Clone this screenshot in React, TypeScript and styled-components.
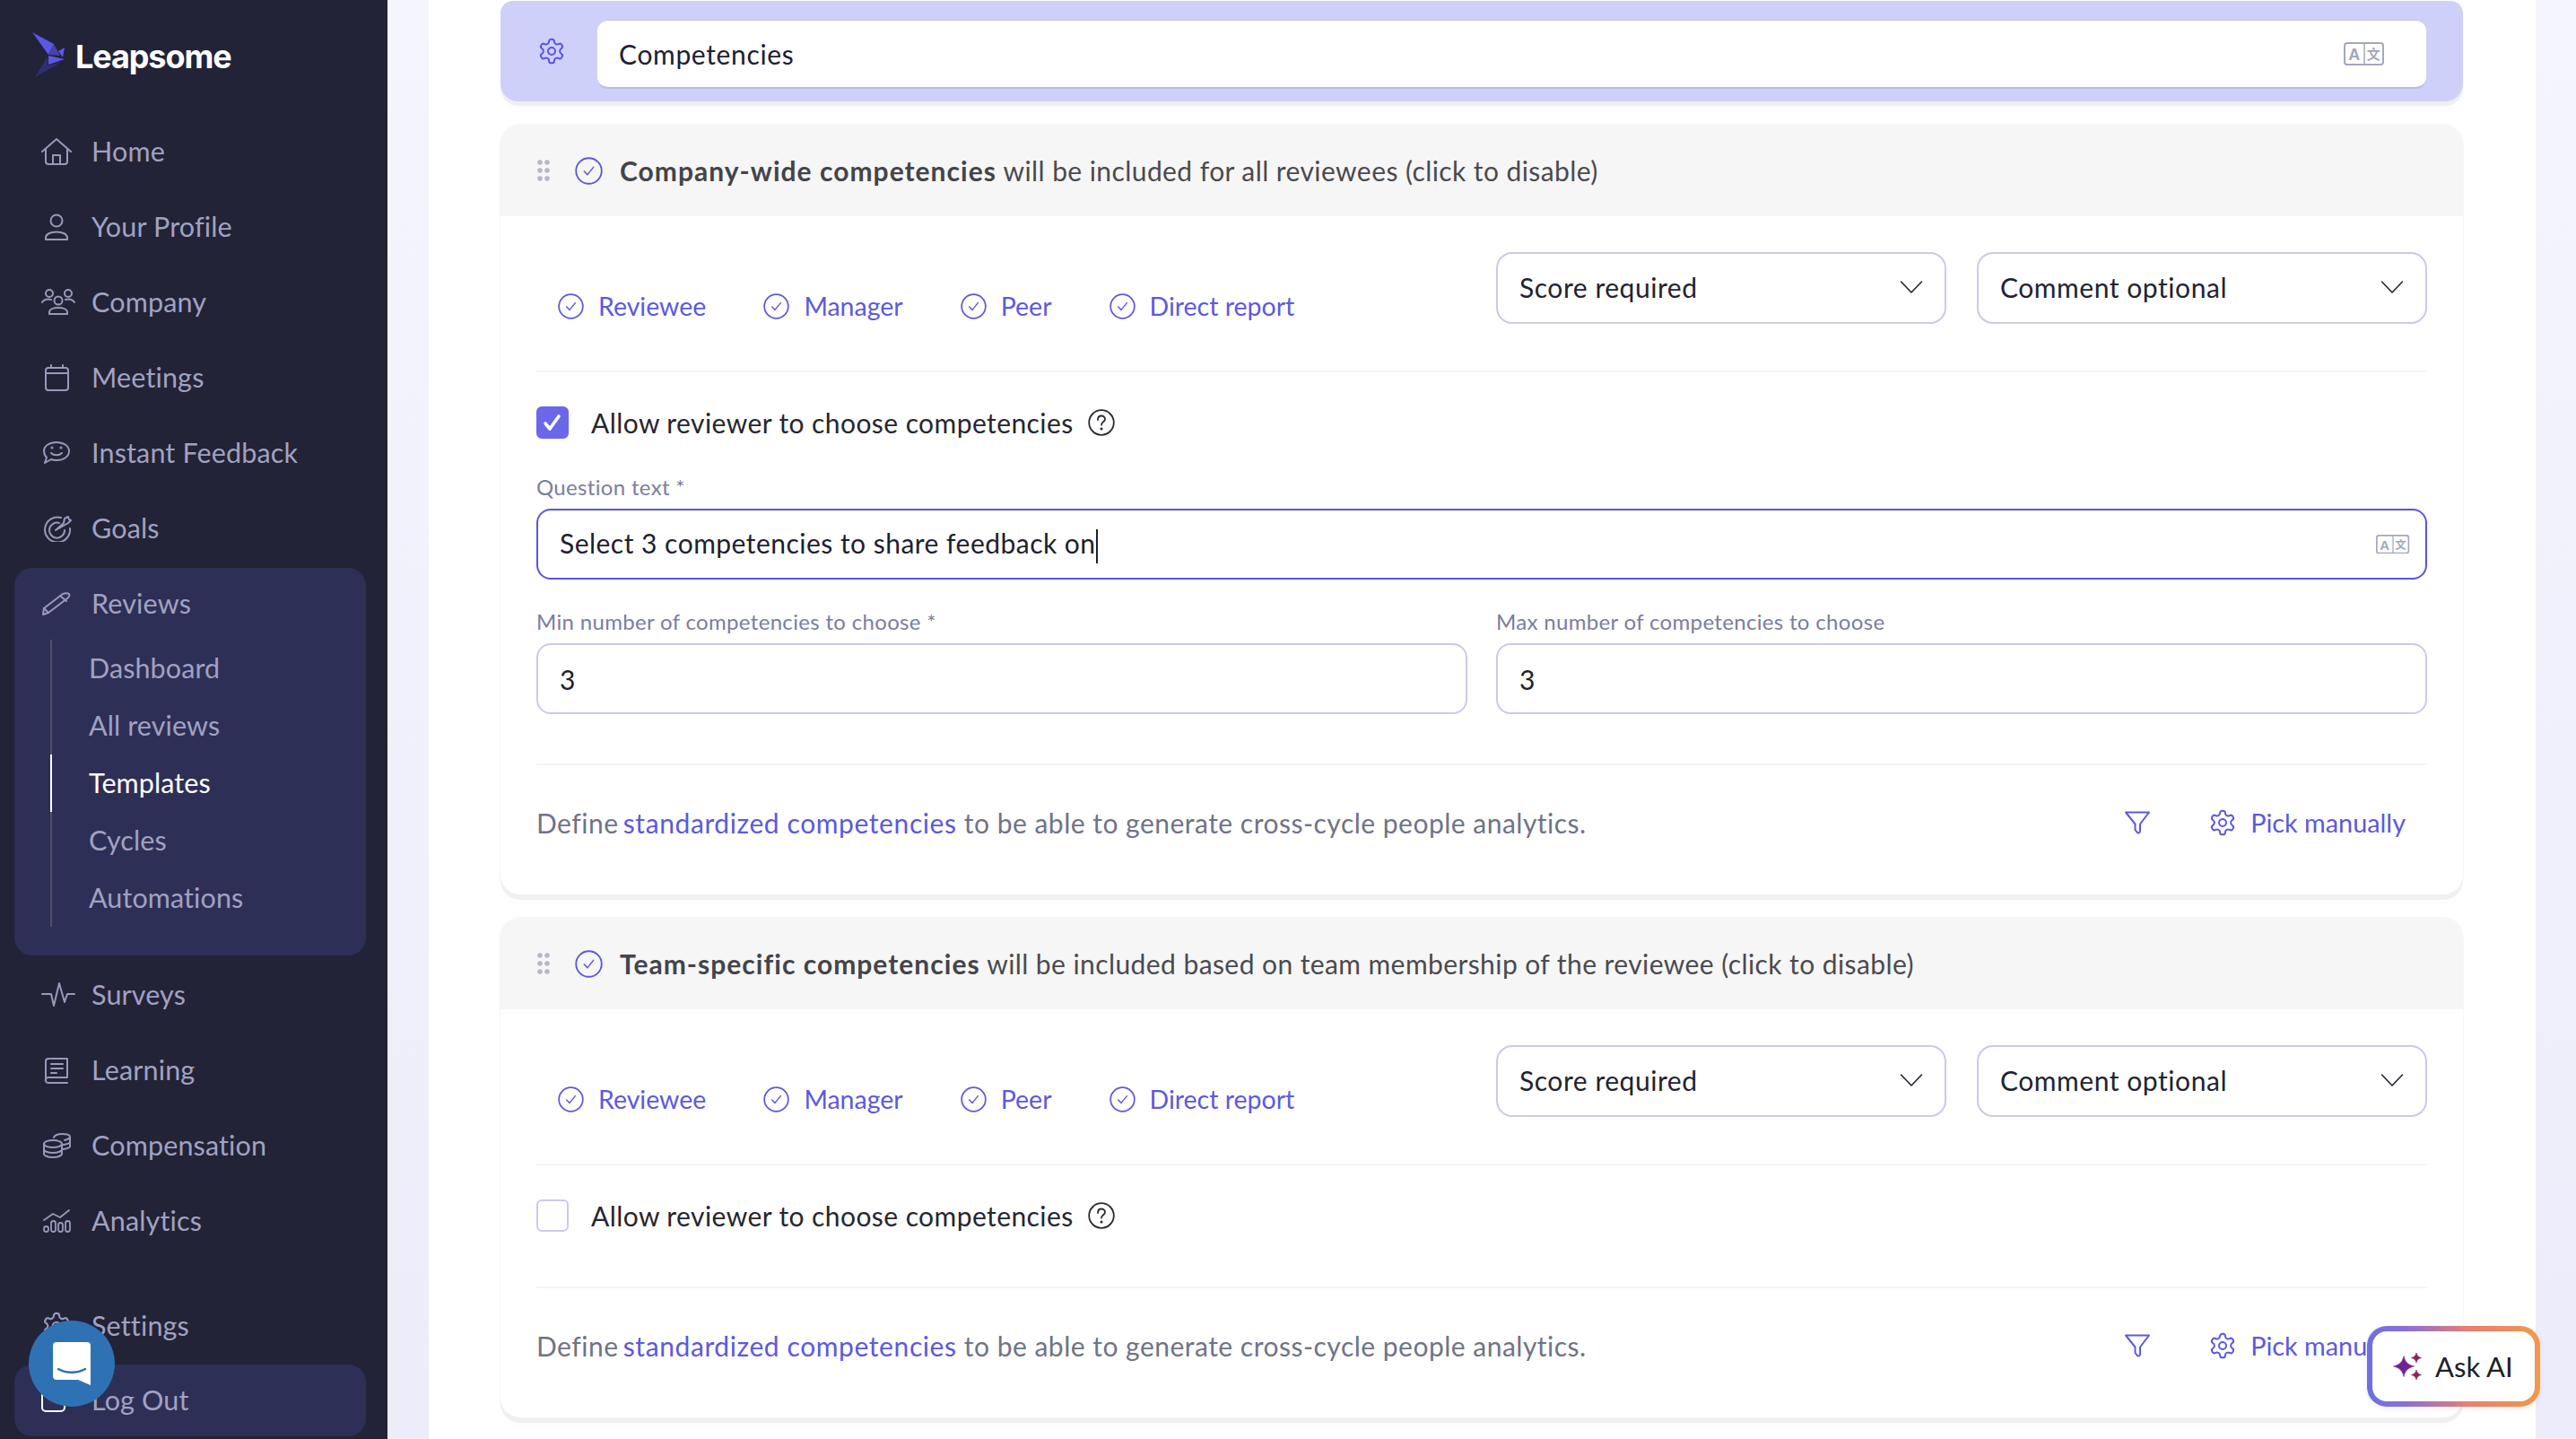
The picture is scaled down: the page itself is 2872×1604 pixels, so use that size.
import React from "react";
import styled, { createGlobalStyle } from "styled-components";

const FONT = `"Lato", "Liberation Sans", sans-serif`;

const Global = createGlobalStyle`
  html, body { margin: 0; padding: 0; background: #fff; overflow: hidden; }
  * { box-sizing: border-box; }
  body { font-family: ${FONT}; }
`;

const Page = styled.div`
  position: relative;
  display: flex;
  width: 2872px;
  height: 1604px;
  overflow: hidden;
`;

const Sidebar = styled.aside`
  flex: 0 0 432px;
  height: 1604px;
  background: #222336;
  display: flex;
  flex-direction: column;
  padding: 0 24px 0 16px;
`;

const LogoRow = styled.div`
  height: 127px;
  display: flex;
  align-items: flex-start;
  gap: 11px;
  padding: 36px 0 0 20px;
  flex: none;
`;

const LogoText = styled.span`
  font-family: "Inter", sans-serif;
  font-weight: 700;
  font-size: 36px;
  line-height: 52px;
  letter-spacing: -1.1px;
  color: #fff;
  margin-top: 1px;
`;

const NavItem = styled.div<{ $h?: number; $mt?: number }>`
  flex: none;
  height: ${(p) => p.$h ?? 84}px;
  margin-top: ${(p) => p.$mt ?? 0}px;
  display: flex;
  align-items: center;
  padding: 0 0 3px 30px;
  color: #a1a2c2;
  font-size: 30.5px;
  letter-spacing: 0.15px;
`;

const IconSlot = styled.span`
  flex: 0 0 56px;
  width: 56px;
  display: flex;
  align-items: center;
  margin-top: 3px;
  color: #9899bb;
`;

const ReviewsPanel = styled.div`
  flex: none;
  margin-top: 2px;
  height: 432px;
  background: #2e2f57;
  border-radius: 20px;
  display: flex;
  flex-direction: column;
`;

const SubList = styled.div`
  margin-left: 40px;
  border-left: 2px solid #4f5069;
  display: flex;
  flex-direction: column;
`;

const SubItem = styled.div<{ $active?: boolean }>`
  height: 64px;
  margin-left: -2px;
  padding: 0 0 3px 41px;
  display: flex;
  align-items: center;
  border-left: 2px solid ${(p) => (p.$active ? "#fff" : "transparent")};
  color: ${(p) => (p.$active ? "#fff" : "#a1a2c2")};
  font-size: 30.5px;
  letter-spacing: 0.1px;
`;

const LogoutPanel = styled(NavItem)`
  background: #2e2f57;
  border-radius: 20px;
`;

const Gutter = styled.main`
  flex: 1;
  height: 1604px;
  padding: 0 46px;
  background: linear-gradient(180deg, #f5f5fe 0%, #ececfa 100%);
`;

const Sheet = styled.div`
  height: 1604px;
  background: #fff;
  padding: 1px 81px 0 80px;
  display: flex;
  flex-direction: column;
  gap: 26px;
`;

const TitleCard = styled.div`
  flex: none;
  height: 112px;
  background: #ced0fa;
  border-radius: 14px 14px 20px 20px;
  box-shadow: 0 5px 0 #efeff3, 0 9px 6px rgba(0, 0, 0, 0.015);
  display: flex;
  align-items: flex-start;
  padding: 21px 41px 0 41px;
`;

const TitleIcon = styled.span`
  flex: 0 0 67px;
  color: #5a55e2;
  display: flex;
  margin-top: 19px;
`;

const TitleInput = styled.div`
  flex: 1;
  height: 77px;
  background: #fff;
  border-radius: 12px;
  border-bottom: 2px solid #babcdc;
  border-top: 1px solid #c3c5ea;
  display: flex;
  align-items: center;
  justify-content: space-between;
  padding: 0 46px 0 24px;
  color: #1f2030;
  font-size: 30px;
  letter-spacing: 0.65px;
`;

const Card = styled.section`
  flex: none;
  border-radius: 22px;
  background: #fff;
  box-shadow: 0 6px 0 #f0f0f0, 0 10px 8px rgba(0, 0, 0, 0.015), 0 0 0 1px #f8f8f8;
`;

const CardHead = styled.header`
  height: 102px;
  background: #f6f6f6;
  border-radius: 22px 22px 0 0;
  display: flex;
  align-items: center;
  padding: 0 0 0 41px;
  color: #4a4a4f;
  font-size: 30px;
  letter-spacing: 0.42px;
`;

const Strong = styled.strong`
  font-weight: 700;
  color: #44444a;
  letter-spacing: 1.02px;
`;

const HeadCheck = styled.span`
  margin-left: 28px;
  margin-right: 19px;
  color: #5d59dd;
  display: flex;
`;

const CardBody = styled.div`
  padding: 40px 40px 0 40px;
`;

const ControlRow = styled.div`
  display: flex;
  justify-content: space-between;
  align-items: flex-start;
  padding-bottom: 52px;
  border-bottom: 2px solid #f4f4f6;
`;

const Roles = styled.div`
  display: flex;
  gap: 64px;
  margin: 40px 0 0 24px;
`;

const Role = styled.span`
  display: flex;
  align-items: center;
  gap: 16px;
  height: 40px;
  color: #5d59dd;
  font-size: 28.5px;
`;

const Selects = styled.div`
  display: flex;
  gap: 34px;
`;

const Select = styled.div`
  width: 502px;
  height: 80px;
  border: 2px solid #c9cbe6;
  border-radius: 18px;
  display: flex;
  align-items: center;
  justify-content: space-between;
  padding: 0 24px 2px;
  color: #22232f;
  font-size: 30px;
  letter-spacing: 0.55px;
`;

const CheckRow = styled.div<{ $mb: number }>`
  display: flex;
  align-items: center;
  gap: 25px;
  margin-top: 38px;
  margin-bottom: ${(p) => p.$mb}px;
  color: #26262e;
  font-size: 30px;
  letter-spacing: 0.42px;
`;

const Box = styled.span<{ $on?: boolean }>`
  width: 36px;
  height: 36px;
  border-radius: 6px;
  background: ${(p) => (p.$on ? "#6b67eb" : "#fff")};
  border: 2px solid ${(p) => (p.$on ? "#6b67eb" : "#c9cbe6")};
  display: flex;
  align-items: center;
  justify-content: center;
  flex: none;
`;

const Help = styled.span`
  display: flex;
  margin-left: -9px;
  color: #2a2a30;
`;

const Label = styled.div<{ $mt?: number }>`
  height: 30px;
  line-height: 30px;
  margin-top: ${(p) => p.$mt ?? 0}px;
  color: #7b7da0;
  font-size: 24px;
  letter-spacing: 0.33px;
`;

const Field = styled.div<{ $focus?: boolean }>`
  height: 79px;
  margin-top: 9px;
  border: 2px solid ${(p) => (p.$focus ? "#5a55d8" : "#c9cbe6")};
  border-radius: 16px;
  display: flex;
  align-items: center;
  justify-content: space-between;
  padding: 0 17px 0 24px;
  color: #1f2030;
  font-size: 30px;
  letter-spacing: 0.48px;
`;

const FieldText = styled.span`
  margin-top: 2px;
`;

const Caret = styled.span`
  display: inline-block;
  width: 2px;
  height: 38px;
  background: #1f2030;
  vertical-align: middle;
`;

const TwoCols = styled.div`
  display: grid;
  grid-template-columns: 1038px 1038px;
  gap: 32px;
  padding-bottom: 55px;
  border-bottom: 2px solid #f4f4f6;
`;

const DefineRow = styled.div`
  display: flex;
  align-items: center;
  height: 50px;
  margin: 40px 0 54px;
  padding-bottom: 2px;
  color: #6f7387;
  font-size: 30px;
`;

const Define = styled.span`
  flex: 1;
  letter-spacing: 0.49px;
`;

const Link = styled.span`
  color: #5d59dd;
  letter-spacing: 0.6px;
  margin-left: -3px;
`;

const FilterIcon = styled.span`
  display: flex;
  color: #5d59dd;
  margin-right: 64px;
`;

const Pick = styled.span`
  display: flex;
  align-items: center;
  gap: 15px;
  color: #5d59dd;
  margin-right: 24px;
  font-size: 28.8px;
`;

const Divider = styled.div`
  border-top: 2px solid #f4f4f6;
`;

const AskAI = styled.button`
  position: absolute;
  left: 2639px;
  top: 1478px;
  width: 193px;
  height: 90px;
  border: 6px solid transparent;
  border-radius: 22px;
  background: linear-gradient(#fff, #fff) padding-box,
    linear-gradient(90deg, #6b6fe8 0%, #8e70d0 25%, #e67f72 58%, #f09a4c 100%) border-box;
  box-shadow: 0 2px 6px rgba(0, 0, 0, 0.08);
  display: flex;
  align-items: center;
  gap: 15px;
  padding: 0 0 0 23px;
  color: #212127;
  font-family: ${FONT};
  font-size: 31px;
`;

const Bubble = styled.div`
  position: absolute;
  left: 32px;
  top: 1472px;
  width: 96px;
  height: 96px;
  border-radius: 50%;
  background: #2e72b4;
  display: flex;
  align-items: center;
  justify-content: center;
`;

/* ---- icons ---- */

type IP = { s?: number };
const Stroke = (w: number, h: number, sw: number, children: React.ReactNode) => (
  <svg width={w} height={h} viewBox={`0 0 ${w} ${h}`} fill="none" stroke="currentColor" strokeWidth={sw} strokeLinecap="round" strokeLinejoin="round">
    {children}
  </svg>
);

const Logo = () => (
  <svg width="37" height="50" viewBox="0 0 37 50" style={{ flex: "none" }}>
    <polygon points="0,0 24,13 18,25" fill="#5b58e6" />
    <polygon points="24,13 31,26 18,25" fill="#4643ad" />
    <polygon points="29,21 36,17 34,28" fill="#5b58e6" />
    <polygon points="18,26 36,30 18,36" fill="#5b58e6" />
    <polygon points="3,50 17,27 17,37 33,33" fill="#2f2e72" />
  </svg>
);

const HomeI = () => Stroke(34, 30, 2, <><path d="M1 15 17 1l16 14" /><path d="M5 12v14a3 3 0 0 0 3 3h18a3 3 0 0 0 3-3V12" /><path d="M13 29V19h8v10" /></>);
const UserI = () => Stroke(34, 30, 2, <><circle cx="17" cy="8" r="6.5" /><path d="M5 29v-2c0-4 5-6.500 12-6.500s12 2.500 12 6.500v2z" /></>);
const CompanyI = () => Stroke(38, 30, 2, <><circle cx="9" cy="5" r="4" /><circle cx="30" cy="5" r="4" /><circle cx="19" cy="13" r="4.500" /><path d="M1 15c2-3 6-4 10-3" /><path d="M37 15c-2-3-6-4-10-3" /><path d="M9 28v-2c0-3 4-5 10-5s10 2 10 5v2z" /></>);
const CalendarI = () => Stroke(34, 30, 2, <><rect x="5" y="4" width="25" height="25" rx="3" /><path d="M5 10h25M11 1v3M24 1v3" /></>);
const FeedbackI = () => Stroke(34, 30, 2, <><path d="M17 3c8 0 14 4 14 10s-6 10-14 10c-2 0-4 0-6-1l-7 4 2-6c-2-2-3-4-3-7 0-6 6-10 14-10z" /><path d="M11 15c3 3 9 3 12 0" /><circle cx="12" cy="9" r=".6" /><circle cx="22" cy="9" r=".6" /></>);
const GoalsI = () => Stroke(34, 30, 2, <><path d="M22 3a14 14 0 1 0 10 12" /><path d="M20 9a8.500 8.500 0 1 0 6 8" /><path d="M16 17 25 9l1-5 4-2 1 3 2 1-3 3z" /></>);
const PencilI = () => Stroke(34, 30, 2, <><path d="M3 20 24 4c2-1 6-1 7 0s0 4-2 5L8 25l-6 2z" /><path d="M3 20l5 5M21 6l7 6" /></>);
const PulseI = () => Stroke(38, 30, 2, <path d="M1 14h10l3 13 6-25 6 21 3-9h8" />);
const BookI = () => Stroke(34, 30, 2, <><path d="M5 27V5a3 3 0 0 1 3-3h21v21H8a3 3 0 0 0-3 4 3 3 0 0 0 3 2h21" /><path d="M11 8h13M11 13h13M11 18h6" /></>);
const CoinsI = () => Stroke(34, 30, 2, <><ellipse cx="13" cy="13" rx="10" ry="4" /><path d="M3 13v11c0 2 4 4 10 4s10-2 10-4V13M3 19c0 2 4 4 10 4s10-2 10-4" /><path d="M14 6c0-2 4-4 9-4s9 1 9 3-2 3-6 4M32 5v11c0 1-4 3-9 3M32 11c0 1-4 3-9 3" /></>);
const AnalyticsI = () => Stroke(34, 30, 1.8, <><path d="M3 14 13 7l8 4 10-8" /><rect x="3" y="21" width="5" height="6" rx="2.500" /><rect x="11" y="15" width="5" height="12" rx="2.500" /><rect x="19" y="17" width="5" height="10" rx="2.500" /><rect x="27" y="15" width="5" height="12" rx="2.500" /></>);

const GearPath = "M12.22 2h-.44a2 2 0 0 0-2 2v.18a2 2 0 0 1-1 1.730l-.43.25a2 2 0 0 1-2 0l-.15-.08a2 2 0 0 0-2.730.73l-.22.38a2 2 0 0 0 .73 2.730l.15.1a2 2 0 0 1 1 1.720v.510a2 2 0 0 1-1 1.740l-.15.09a2 2 0 0 0-.73 2.730l.22.38a2 2 0 0 0 2.730.73l.15-.08a2 2 0 0 1 2 0l.43.25a2 2 0 0 1 1 1.730V20a2 2 0 0 0 2 2h.44a2 2 0 0 0 2-2v-.18a2 2 0 0 1 1-1.730l.43-.25a2 2 0 0 1 2 0l.15.08a2 2 0 0 0 2.730-.73l.22-.39a2 2 0 0 0-.73-2.730l-.15-.08a2 2 0 0 1-1-1.740v-.5a2 2 0 0 1 1-1.740l.15-.09a2 2 0 0 0 .73-2.730l-.22-.38a2 2 0 0 0-2.730-.73l-.15.08a2 2 0 0 1-2 0l-.43-.25a2 2 0 0 1-1-1.730V4a2 2 0 0 0-2-2z";
const Gear = ({ s = 30 }: IP) => (
  <svg width={s} height={s} viewBox="0 0 24 24" fill="none" stroke="currentColor" strokeWidth="1.500" strokeLinecap="round" strokeLinejoin="round">
    <path d={GearPath} />
    <circle cx="12" cy="12" r="3" />
  </svg>
);

const CircleCheck = ({ s = 30 }: IP) => (
  <svg width={s} height={s} viewBox="0 0 30 30" fill="none" stroke="currentColor" strokeLinecap="round" strokeLinejoin="round" style={{ flex: "none" }}>
    <circle cx="15" cy="15" r="13.800" strokeWidth="1.800" />
    <path d="M10 15.500l3.500 3.500 6.500-8" strokeWidth="1.500" />
  </svg>
);

const Chevron = () => (
  <svg width="26" height="16" viewBox="0 0 26 16" fill="none" stroke="#22232f" strokeWidth="1.600" strokeLinecap="round" strokeLinejoin="round">
    <path d="M1.500 2 13 14 24.500 2" />
  </svg>
);

const Translate = ({ w = 46 }: { w?: number }) => (
  <svg width={w} viewBox="0 0 46 26" style={{ flex: "none" }}>
    <rect x="1" y="1" width="43" height="24" rx="3" fill="none" stroke="#a3a8bb" strokeWidth="2" />
    <path d="M23 1v24" stroke="#a3a8bb" strokeWidth="1.500" />
    <text x="12" y="20" textAnchor="middle" fontSize="18" fontWeight="700" fontFamily="Liberation Sans, sans-serif" fill="#a3a8bb">A</text>
    <text x="33.500" y="19" textAnchor="middle" fontSize="15" fontWeight="700" fontFamily="Noto Sans CJK SC, sans-serif" fill="#a3a8bb">文</text>
  </svg>
);

const TickBox = () => (
  <svg width="22" height="20" viewBox="0 0 22 20" fill="none" stroke="#fff" strokeWidth="3.600" strokeLinecap="round" strokeLinejoin="round">
    <path d="M3 11 8 17 18 3" />
  </svg>
);

const HelpIcon = () => (
  <svg width="30" height="30" viewBox="0 0 30 30" fill="none" stroke="currentColor" strokeWidth="1.800" strokeLinecap="round">
    <circle cx="15" cy="15" r="13.800" />
    <path d="M11 12c0-3 2-4.500 4-4.500s4 1.500 4 3.800c0 3-4 3-4 6.200" />
    <circle cx="15" cy="22" r=".7" />
  </svg>
);

const Funnel = () => (
  <svg width="30" height="26" viewBox="0 0 30 26" fill="none" stroke="currentColor" strokeWidth="2" strokeLinejoin="round">
    <path d="M2 1.500h26L18 14.500v8c0 2-2 2.500-3.500 1L12.500 21v-6.500z" />
  </svg>
);

const Sparkles = () => (
  <svg width="32" height="30" viewBox="0 0 31 30">
    <path d="M11.500 3.500C13 10 15.500 13 23 15c-7.500 2-10 5-11.500 11.500C10 20 7.500 17 0 15c7.500-2 10-5 11.500-11.500z" fill="#6e2490" stroke="#6e2490" strokeWidth=".6" />
    <path d="M25.500 0c.7 3 2 4.500 5.500 5.500-3.500 1-4.800 2.500-5.500 5.500-.7-3-2-4.500-5.500-5.500 3.500-1 4.800-2.500 5.500-5.500zM25.500 19c.7 3 2 4.500 5.500 5.500-3.500 1-4.800 2.500-5.500 5.500-.7-3-2-4.500-5.500-5.500 3.500-1 4.800-2.500 5.500-5.500z" fill="#8b2257" stroke="#8b2257" strokeWidth=".6" />
  </svg>
);

const ChatGlyph = () => (
  <svg width="42" height="48" viewBox="0 0 42 48">
    <path d="M4 0h34a4 4 0 0 1 4 4v44l-14-6H4a4 4 0 0 1-4-4V4a4 4 0 0 1 4-4z" fill="#fff" />
    <path d="M6 30c9 5 21 5 30 0" fill="none" stroke="#2e72b4" strokeWidth="2.500" strokeLinecap="round" />
  </svg>
);

const LogoutGlyph = () => (
  <svg width="28" height="30" viewBox="0 0 28 30" fill="none" stroke="#ffffff" strokeWidth="2">
    <rect x="1" y="1" width="25" height="26" rx="4" />
  </svg>
);

const topNav: [string, React.FC][] = [
  ["Home", HomeI],
  ["Your Profile", UserI],
  ["Company", CompanyI],
  ["Meetings", CalendarI],
  ["Instant Feedback", FeedbackI],
  ["Goals", GoalsI],
];
const midNav: [string, React.FC][] = [
  ["Surveys", PulseI],
  ["Learning", BookI],
  ["Compensation", CoinsI],
  ["Analytics", AnalyticsI],
];
const subNav = ["Dashboard", "All reviews", "Templates", "Cycles", "Automations"];
const roles = ["Reviewee", "Manager", "Peer", "Direct report"];

const Controls = () => (
  <ControlRow>
    <Roles>
      {roles.map((r) => (
        <Role key={r}>
          <CircleCheck s={29} />
          {r}
        </Role>
      ))}
    </Roles>
    <Selects>
      <Select>Score required<Chevron /></Select>
      <Select>Comment optional<Chevron /></Select>
    </Selects>
  </ControlRow>
);

const DefineLine = () => (
  <DefineRow>
    <Define>
      Define <Link>standardized competencies</Link> to be able to generate cross-cycle people analytics.
    </Define>
    <FilterIcon><Funnel /></FilterIcon>
    <Pick><Gear s={32} />Pick manually</Pick>
  </DefineRow>
);

const Head = ({ bold, rest }: { bold: string; rest: string }) => (
  <CardHead>
    <svg width="14" height="24" viewBox="0 0 14 24" fill="#b6b8c8">
      <circle cx="3" cy="3" r="2.800" /><circle cx="11" cy="3" r="2.800" />
      <circle cx="3" cy="12" r="2.800" /><circle cx="11" cy="12" r="2.800" />
      <circle cx="3" cy="21" r="2.800" /><circle cx="11" cy="21" r="2.800" />
    </svg>
    <HeadCheck><CircleCheck s={31} /></HeadCheck>
    <span><Strong>{bold}</Strong> {rest}</span>
  </CardHead>
);

export default function App() {
  return (
    <Page>
      <Global />
      <Sidebar>
        <LogoRow>
          <Logo />
          <LogoText>Leapsome</LogoText>
        </LogoRow>
        {topNav.map(([t, I]) => (
          <NavItem key={t}><IconSlot><I /></IconSlot>{t}</NavItem>
        ))}
        <ReviewsPanel>
          <NavItem $h={80}><IconSlot><PencilI /></IconSlot>Reviews</NavItem>
          <SubList>
            {subNav.map((t) => (
              <SubItem key={t} $active={t === "Templates"}>{t}</SubItem>
            ))}
          </SubList>
        </ReviewsPanel>
        <NavItem $mt={2}><IconSlot><PulseI /></IconSlot>Surveys</NavItem>
        {midNav.slice(1).map(([t, I]) => (
          <NavItem key={t}><IconSlot><I /></IconSlot>{t}</NavItem>
        ))}
        <NavItem $mt={33}><IconSlot><Gear s={34} /></IconSlot>Settings</NavItem>
        <LogoutPanel $h={80} $mt={1}><IconSlot><LogoutGlyph /></IconSlot>Log Out</LogoutPanel>
      </Sidebar>
      <Gutter>
        <Sheet>
          <TitleCard>
            <TitleIcon><Gear s={32} /></TitleIcon>
            <TitleInput>Competencies<Translate /></TitleInput>
          </TitleCard>
          <Card>
            <Head bold="Company-wide competencies" rest="will be included for all reviewees (click to disable)" />
            <CardBody>
              <Controls />
              <CheckRow $mb={39}>
                <Box $on><TickBox /></Box>
                Allow reviewer to choose competencies
                <Help><HelpIcon /></Help>
              </CheckRow>
              <Label>Question text *</Label>
              <Field $focus>
                <FieldText>Select 3 competencies to share feedback on<Caret /></FieldText>
                <Translate w={38} />
              </Field>
              <TwoCols>
                <div>
                  <Label $mt={32}>Min number of competencies to choose *</Label>
                  <Field>3</Field>
                </div>
                <div>
                  <Label $mt={32}>Max number of competencies to choose</Label>
                  <Field>3</Field>
                </div>
              </TwoCols>
              <DefineLine />
            </CardBody>
          </Card>
          <Card>
            <Head bold="Team-specific competencies" rest="will be included based on team membership of the reviewee (click to disable)" />
            <CardBody>
              <Controls />
              <CheckRow $mb={61}>
                <Box />
                Allow reviewer to choose competencies
                <Help><HelpIcon /></Help>
              </CheckRow>
              <Divider />
              <DefineLine />
            </CardBody>
          </Card>
        </Sheet>
      </Gutter>
      <AskAI><Sparkles />Ask AI</AskAI>
      <Bubble><ChatGlyph /></Bubble>
    </Page>
  );
}
